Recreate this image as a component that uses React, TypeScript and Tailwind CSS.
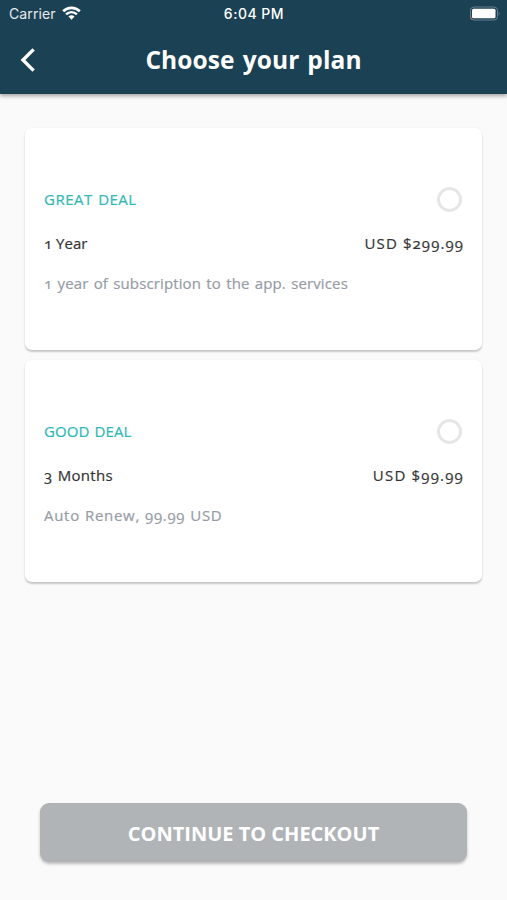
type Plan = {
  tag: string
  name: string
  price: string
  description: string
  tagClass: string
  nameClass: string
  priceClass: string
  descriptionClass: string
}

const plans: Plan[] = [
  {
    tag: "GREAT DEAL",
    name: "1 Year",
    price: "USD $299.99",
    description: "1 year of subscription to the app. services",
    tagClass: "tracking-[0.5px] [word-spacing:1px]",
    nameClass: "tracking-[0px]",
    priceClass: "tracking-[1.1px] -mr-[1px]",
    descriptionClass: "tracking-[0.13px] [word-spacing:1.2px]",
  },
  {
    tag: "GOOD DEAL",
    name: "3 Months",
    price: "USD $99.99",
    description: "Auto Renew, 99.99 USD",
    tagClass: "tracking-[0.1px] [word-spacing:1px]",
    nameClass: "tracking-[0.3px] [word-spacing:1px]",
    priceClass: "tracking-[1.2px] -mr-[1px]",
    descriptionClass: "tracking-[0.7px] [word-spacing:0.5px]",
  },
]

function StatusBar() {
  return (
    <div className="grid h-7 grid-cols-3 items-center pl-[9px] pr-[7px] font-['Inter',sans-serif] text-[14px] leading-7">
      <div className="flex items-center gap-[6px]">
        <span className="tracking-[0.1px] text-white/90">Carrier</span>
        <svg className="-mt-[2px]" width="19" height="14" viewBox="0 0 19 14" fill="none" stroke="white">
          <path d="M1.2 5.2a11.8 11.8 0 0 1 16.6 0" strokeWidth="2.7" />
          <path d="M4.1 8.4a7.5 7.5 0 0 1 10.8 0" strokeWidth="2.4" />
          <path d="M9.5 13.7 6.5 10.6a4.2 4.2 0 0 1 6 0z" fill="white" stroke="none" />
        </svg>
      </div>
      <span className="-ml-[1px] text-center font-medium tracking-[0.5px] text-white">6:04 PM</span>
      <svg className="-mt-[2px] justify-self-end" width="31" height="15" viewBox="0 0 31 15" fill="none">
        <rect x="1.5" y="1" width="27" height="13" rx="3.5" stroke="#667f8b" />
        <path d="M1.6 9.5v2.2q0 1.8 2 2" stroke="#b8696b" />
        <rect x="3" y="2.7" width="23.5" height="9.6" rx="1.5" fill="white" />
        <path d="M29.8 5.2q1.6 2.3 0 4.6z" fill="#667f8b" />
      </svg>
    </div>
  )
}

function Header() {
  return (
    <header className="h-[94px] bg-[#1b4154] text-white shadow-[0_2px_4px_rgba(0,0,0,0.35)]">
      <StatusBar />
      <div className="grid h-[63px] grid-cols-[56px_1fr_56px] items-center">
        <button className="pl-5" aria-label="Back">
          <svg width="16" height="26" viewBox="0 0 16 26" fill="none" stroke="white" strokeWidth="3.4">
            <path d="M13.6 2.4 3 13l10.6 10.6" />
          </svg>
        </button>
        <h1 className="text-center text-[24.5px] font-bold leading-8 tracking-[0.1px] [word-spacing:1.5px]">
          Choose your plan
        </h1>
      </div>
    </header>
  )
}

function PlanCard({ plan }: { plan: Plan }) {
  return (
    <section className="flex h-[222px] flex-col rounded-[7px] bg-white px-[19px] pt-[57px] shadow-[0_2px_2px_rgba(0,0,0,0.2),0_0_2px_rgba(0,0,0,0.06)] [-webkit-text-stroke:0.2px]">
      <div className="flex h-7 items-center justify-between">
        <h2 className={`text-[15px] text-[#2eb8b5] ${plan.tagClass}`}>{plan.tag}</h2>
        <span className="mr-px size-[25px] rounded-full border-[3px] border-[#e6e6e6]" />
      </div>
      <div className="mt-[18px] flex h-6 items-center justify-between text-[15px] text-[#343434]">
        <span className={plan.nameClass}>{plan.name}</span>
        <span className={plan.priceClass}>{plan.price}</span>
      </div>
      <p className={`mt-4 text-[15px] leading-6 text-[#969ba6] ${plan.descriptionClass}`}>{plan.description}</p>
    </section>
  )
}

export default function App() {
  return (
    <div className="flex h-[900px] w-[507px] flex-col overflow-hidden bg-[#fafafa] font-['Open_Sans','Noto_Sans',sans-serif] oldstyle-nums">
      <Header />
      <main className="flex flex-1 flex-col px-[25px] pt-[34px]">
        <div className="flex flex-col gap-[10px]">
          {plans.map((plan) => (
            <PlanCard key={plan.tag} plan={plan} />
          ))}
        </div>
        <button className="mx-[15px] mb-[38px] mt-auto h-[59px] rounded-[9px] bg-[#b0b4b7] pt-[2px] text-[20px] font-bold text-white shadow-[0_2px_3px_rgba(0,0,0,0.25)]">
          CONTINUE TO CHECKOUT
        </button>
      </main>
    </div>
  )
}
